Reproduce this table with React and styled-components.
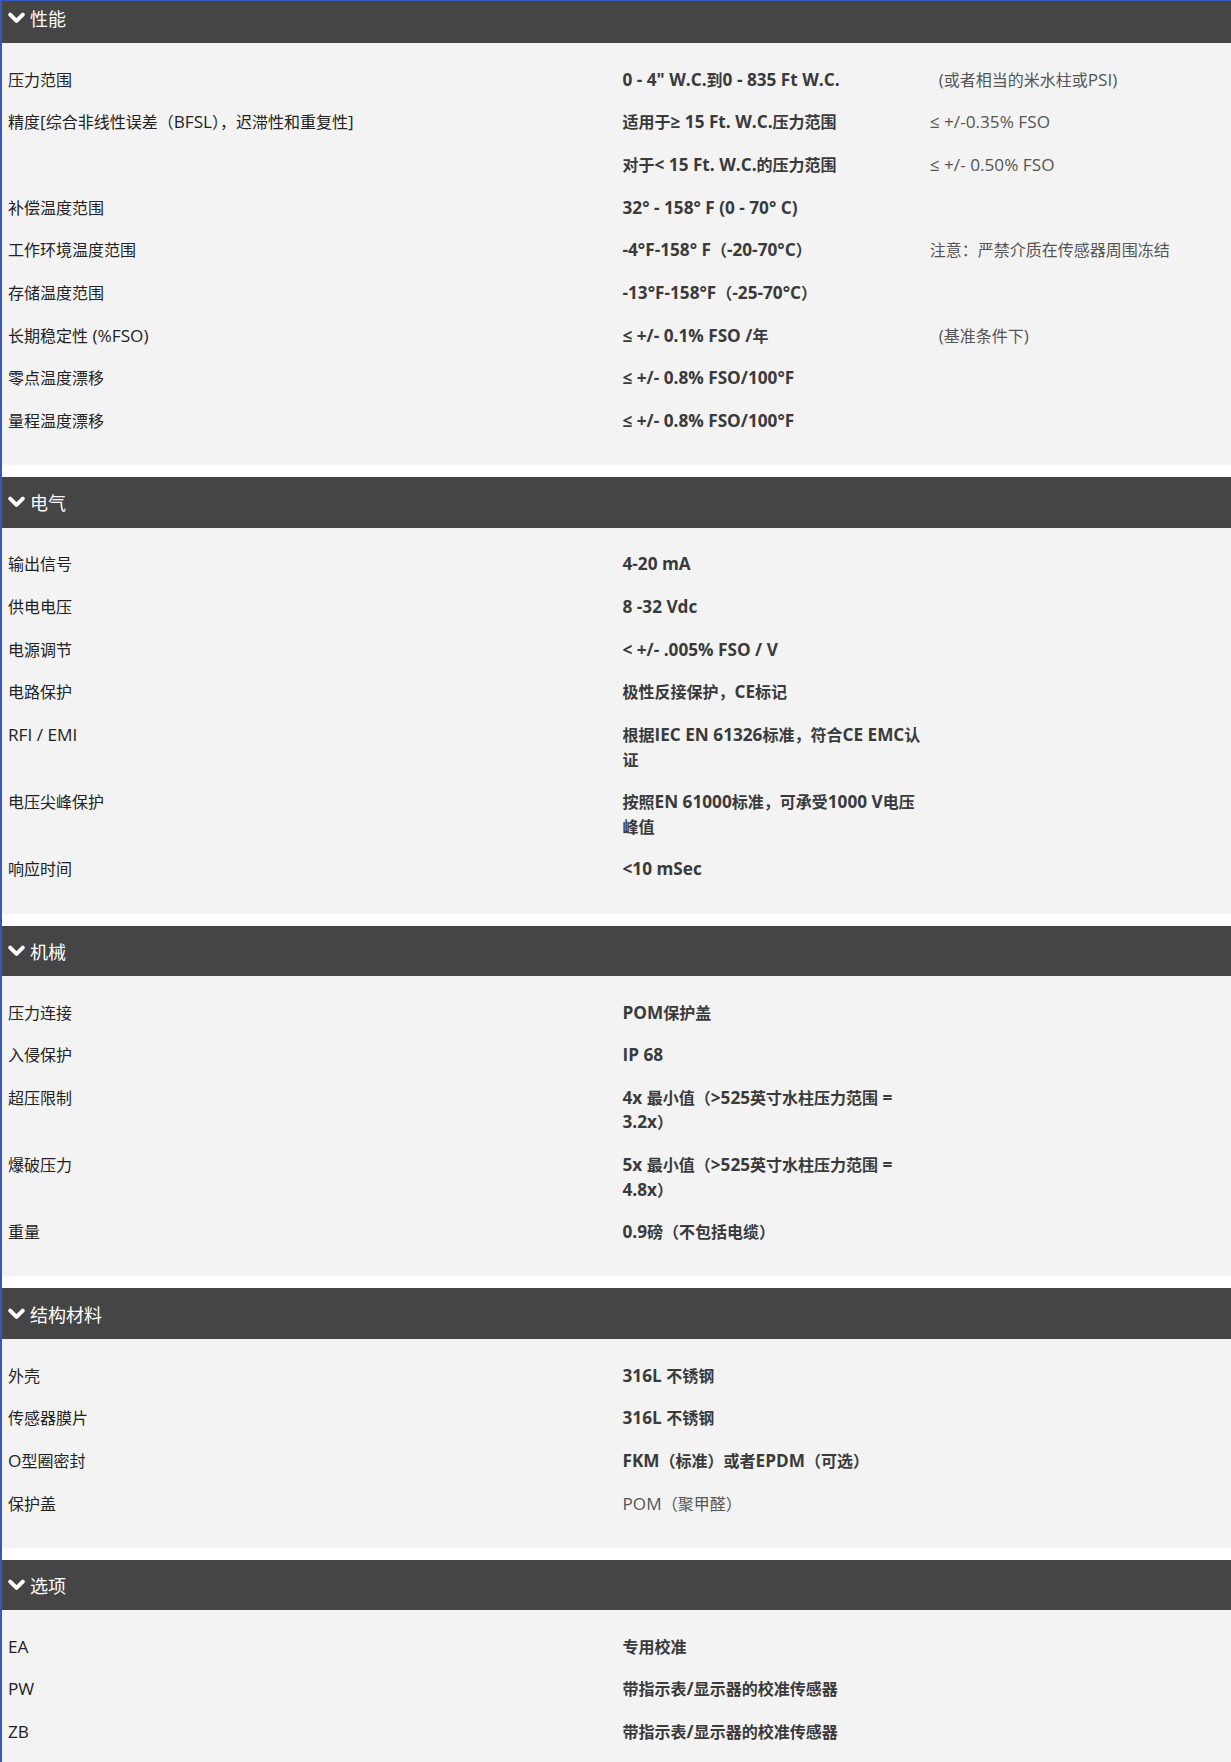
import React from "react";
import styled, { createGlobalStyle } from "styled-components";

const Global = createGlobalStyle`
  html, body { margin: 0; padding: 0; background: #ffffff; }
  body { font-family: "Open Sans", "Noto Sans CJK SC", sans-serif; }
`;

const Frame = styled.div`
  height: 1762px;
  overflow: hidden;
  border-top: 1px solid #3557c0;
  border-left: 2px solid #3557c0;
  box-sizing: border-box;
`;

const Scroller = styled.div`
  margin-top: -8.5px;
  display: flex;
  flex-direction: column;
  gap: 12px;
`;

const Section = styled.section`
  display: flex;
  flex-direction: column;
`;

const Header = styled.div`
  height: 50.5px;
  background: #454545;
  color: #ffffff;
  display: flex;
  align-items: center;
  gap: 5px;
  padding-left: 6px;
  font-size: 18px;
  font-family: "Open Sans", "Noto Sans CJK SC", sans-serif;
`;

const Chevron = styled.svg`
  width: 17px;
  height: 12px;
  flex: none;
`;

const Body = styled.div`
  background: #f3f3f3;
  padding: 15.5px 0 22.5px;
`;

const Row = styled.div`
  display: grid;
  grid-template-columns: 50% 25% 25%;
  font-size: 16px;
  line-height: 24.5px;
`;

const Cell = styled.div`
  padding: 9.1px 6px;
`;

const Label = styled(Cell)`
  color: #222222;
`;

const Value = styled(Cell)`
  padding-right: 0;
  color: ${(p) => (p.$plain ? "#555555" : "#3a3a3a")};
  font-weight: ${(p) => (p.$plain ? 400 : 700)};
`;

const Note = styled(Cell)`
  color: #555555;
  white-space: pre;
`;

const Latin = styled.span`
  font-size: 17.2px;
`;

const CJK_RE = /([\u3000-\u303f\u3400-\u9fff\uff00-\uffef]+)/;

function Mixed({ text }) {
  if (!text) return null;
  return text
    .split(CJK_RE)
    .filter((part) => part !== "")
    .map((part, i) =>
      CJK_RE.test(part) ? <span key={i}>{part}</span> : <Latin key={i}>{part}</Latin>
    );
}

const sections = [
  {
    title: "性能",
    rows: [
      ["压力范围", '0 - 4" W.C.到0 - 835 Ft W.C.', "  (或者相当的米水柱或PSI)"],
      ["精度[综合非线性误差（BFSL），迟滞性和重复性]", "适用于≥ 15 Ft. W.C.压力范围", "≤ +/-0.35% FSO"],
      ["", "对于< 15 Ft. W.C.的压力范围", "≤ +/- 0.50% FSO"],
      ["补偿温度范围", "32° - 158° F (0 - 70° C)"],
      ["工作环境温度范围", "-4°F-158° F（-20-70°C）", "注意：严禁介质在传感器周围冻结"],
      ["存储温度范围", "-13°F-158°F（-25-70°C）"],
      ["长期稳定性 (%FSO)", "≤ +/- 0.1% FSO /年", "  (基准条件下)"],
      ["零点温度漂移", "≤ +/- 0.8% FSO/100°F"],
      ["量程温度漂移", "≤ +/- 0.8% FSO/100°F"],
    ],
  },
  {
    title: "电气",
    rows: [
      ["输出信号", "4-20 mA"],
      ["供电电压", "8 -32 Vdc"],
      ["电源调节", "< +/- .005% FSO / V"],
      ["电路保护", "极性反接保护，CE标记"],
      ["RFI / EMI", "根据IEC EN 61326标准，符合CE EMC认证"],
      ["电压尖峰保护", "按照EN 61000标准，可承受1000 V电压峰值"],
      ["响应时间", "<10 mSec"],
    ],
  },
  {
    title: "机械",
    rows: [
      ["压力连接", "POM保护盖"],
      ["入侵保护", "IP 68"],
      ["超压限制", "4x 最小值（>525英寸水柱压力范围 = 3.2x）"],
      ["爆破压力", "5x 最小值（>525英寸水柱压力范围 = 4.8x）"],
      ["重量", "0.9磅（不包括电缆）"],
    ],
  },
  {
    title: "结构材料",
    rows: [
      ["外壳", "316L 不锈钢"],
      ["传感器膜片", "316L 不锈钢"],
      ["O型圈密封", "FKM（标准）或者EPDM（可选）"],
      ["保护盖", "POM（聚甲醛）", null, true],
    ],
  },
  {
    title: "选项",
    rows: [
      ["EA", "专用校准"],
      ["PW", "带指示表/显示器的校准传感器"],
      ["ZB", "带指示表/显示器的校准传感器"],
    ],
  },
];

function ChevronDown() {
  return (
    <Chevron viewBox="0 0 17 12" aria-hidden="true">
      <path
        d="M2.2 2.6 L8.5 8.9 L14.8 2.6"
        fill="none"
        stroke="#ffffff"
        strokeWidth="3.9"
        strokeLinecap="round"
        strokeLinejoin="round"
      />
    </Chevron>
  );
}

export default function App() {
  return (
    <>
      <Global />
      <Frame>
        <Scroller>
          {sections.map((s) => (
            <Section key={s.title}>
              <Header>
                <ChevronDown />
                <span>{s.title}</span>
              </Header>
              <Body>
                {s.rows.map(([label, value, note, plain], i) => (
                  <Row key={i}>
                    <Label>
                      <Mixed text={label} />
                    </Label>
                    <Value $plain={plain}>
                      <Mixed text={value} />
                    </Value>
                    <Note>
                      <Mixed text={note} />
                    </Note>
                  </Row>
                ))}
              </Body>
            </Section>
          ))}
        </Scroller>
      </Frame>
    </>
  );
}
